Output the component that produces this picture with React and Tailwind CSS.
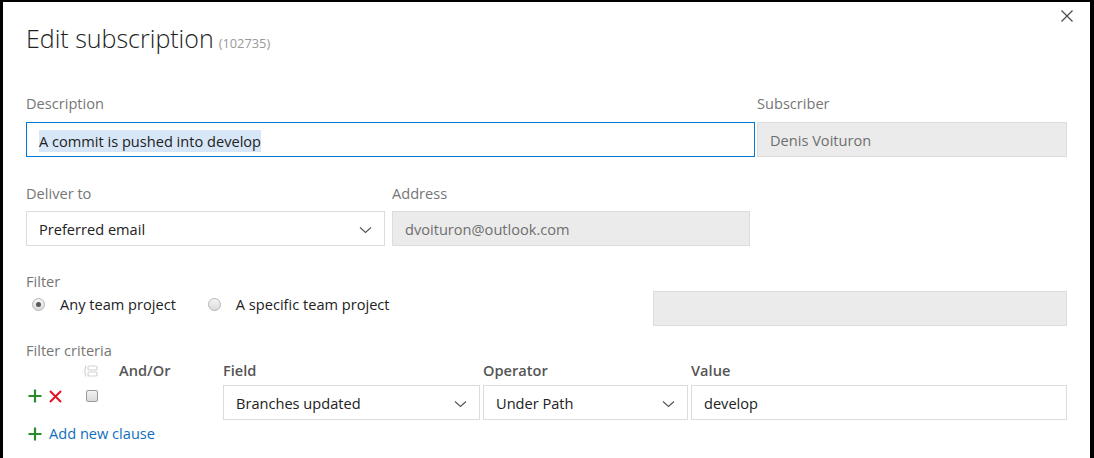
import React from 'react';

const font = { fontFamily: '"Open Sans", "Noto Sans", sans-serif' };

// thin chevron used by the dropdowns
const Chevron = () => (
  <svg width="13" height="8" viewBox="0 0 13 8" className="shrink-0">
    <path d="M1 1.5 L6.5 6.5 L12 1.5" fill="none" stroke="#555" strokeWidth="1.1" />
  </svg>
);

const Label = ({ children, className = '' }) => (
  <div className={`text-[14.6px] leading-[20px] text-[#767676] ${className}`}>{children}</div>
);

const Select = ({ value, className = '' }) => (
  <div className={`flex h-[35px] items-center justify-between border border-[#dcdcdc] bg-white pl-[12px] pr-[12px] pt-[2px] text-[14.6px] text-[#222] ${className}`}>
    <span>{value}</span>
    <Chevron />
  </div>
);

const Disabled = ({ value, className = '' }) => (
  <div className={`flex h-[35px] items-center border border-[#dcdcdc] bg-[#ebebeb] pl-[12px] pt-[2px] text-[14.6px] text-[#6f6f6f] ${className}`}>
    {value}
  </div>
);

const Radio = ({ checked, label }) => (
  <label className="flex items-center">
    <span className="flex h-[13px] w-[13px] items-center justify-center rounded-full border border-[#b5b5b5] bg-gradient-to-b from-[#f4f4f4] to-[#dcdcdc]">
      {checked && <span className="h-[5px] w-[5px] rounded-full bg-[#5a5a5a]" />}
    </span>
    <span className="ml-[15px] text-[14.6px] text-[#222]">{label}</span>
  </label>
);

const PlusIcon = ({ size = 14 }) => (
  <svg width={size} height={size} viewBox="0 0 14 14">
    <path d="M7 0.5 V13.5 M0.5 7 H13.5" stroke="#2b8a2b" strokeWidth="2.2" />
  </svg>
);

const CrossIcon = () => (
  <svg width="13" height="13" viewBox="0 0 13 13">
    <path d="M1 1 L12 12 M12 1 L1 12" stroke="#e81123" strokeWidth="2" />
  </svg>
);

const GroupIcon = () => (
  <svg width="15" height="14" viewBox="0 0 15 14">
    <path d="M3 1.5 Q0.8 7 3 12.5" fill="none" stroke="#d2d2d2" strokeWidth="1.2" />
    <rect x="5" y="2" width="9" height="4" rx="1.3" fill="none" stroke="#d2d2d2" strokeWidth="1.2" />
    <rect x="5" y="8" width="9" height="4" rx="1.3" fill="none" stroke="#d2d2d2" strokeWidth="1.2" />
  </svg>
);

export default function App() {
  return (
    <div style={font} className="relative h-[458px] w-[1094px] overflow-hidden border-l-[3px] border-r-[4px] border-t-[2px] border-black bg-white">
      {/* close button */}
      <button className="absolute right-[15px] top-[6px] p-[2px]">
        <svg width="12" height="12" viewBox="0 0 12 12">
          <path d="M0.5 0.5 L11.5 11.5 M11.5 0.5 L0.5 11.5" stroke="#444" strokeWidth="1.1" />
        </svg>
      </button>

      <div className="pl-[23px] pr-[23px]">
        {/* title */}
        <div className="flex items-baseline pt-[18px]">
          <h1 className="text-[25px] font-light leading-[36px] text-[#222]">Edit subscription</h1>
          <span className="ml-[5px] text-[12.8px] text-[#999]">(102735)</span>
        </div>

        {/* description / subscriber */}
        <div className="mt-[37px] flex gap-[2px]">
          <div className="w-[729px]">
            <Label>Description</Label>
            <div className="mt-[9px] flex h-[35px] items-center border border-[#0078d4] pl-[12px] pt-[2px] text-[14.6px] text-[#222]">
              <span className="bg-[#d8e7f7] leading-[22px]">A commit is pushed into develop</span>
            </div>
          </div>
          <div className="w-[310px]">
            <Label>Subscriber</Label>
            <Disabled value="Denis Voituron" className="mt-[9px]" />
          </div>
        </div>

        {/* deliver to / address */}
        <div className="mt-[26px] flex gap-[7px]">
          <div className="w-[359px]">
            <Label>Deliver to</Label>
            <Select value="Preferred email" className="mt-[8px]" />
          </div>
          <div className="w-[358px]">
            <Label>Address</Label>
            <Disabled value="dvoituron@outlook.com" className="mt-[8px]" />
          </div>
        </div>

        {/* filter */}
        <div className="mt-[25px]">
          <Label>Filter</Label>
          <div className="flex items-start">
            <div className="flex h-[28px] w-[627px] items-center gap-[32px] pl-[6px]">
              <Radio checked label="Any team project" />
              <Radio label="A specific team project" />
            </div>
            <Disabled value="" className="w-[414px]" />
          </div>
        </div>

        {/* filter criteria */}
        <div className="mt-[14px]">
          <Label>Filter criteria</Label>
          <div className="grid grid-cols-[194px_257px_205px_376px] gap-x-[3px]">
            <div className="flex h-[22px] items-center text-[14.6px] font-semibold text-[#555]">
              <span className="ml-[57px]"><GroupIcon /></span>
              <span className="ml-[21px]">And/Or</span>
            </div>
            <div className="flex h-[22px] items-center text-[14.6px] font-semibold text-[#555]">Field</div>
            <div className="flex h-[22px] items-center text-[14.6px] font-semibold text-[#555]">Operator</div>
            <div className="flex h-[22px] items-center text-[14.6px] font-semibold text-[#555]">Value</div>

            <div className="mt-[3px] flex items-start pt-[4px]">
              <span className="ml-[2px]"><PlusIcon /></span>
              <span className="ml-[7px] mt-[1px]"><CrossIcon /></span>
              <span className="ml-[24px] mt-[1px] h-[12px] w-[12px] rounded-[2px] border border-[#9a9a9a] bg-gradient-to-b from-[#f2f2f2] to-[#dadada]" />
            </div>
            <Select value="Branches updated" className="mt-[3px]" />
            <Select value="Under Path" className="mt-[3px]" />
            <div className="mt-[3px] flex h-[35px] items-center border border-[#dcdcdc] pl-[12px] pt-[2px] text-[14.6px] text-[#222]">develop</div>
          </div>

          <button className="mt-[3px] flex items-center text-[14.6px] text-[#106ebe]">
            <span className="ml-[2px]"><PlusIcon /></span>
            <span className="ml-[7px]">Add new clause</span>
          </button>
        </div>
      </div>
    </div>
  );
}
